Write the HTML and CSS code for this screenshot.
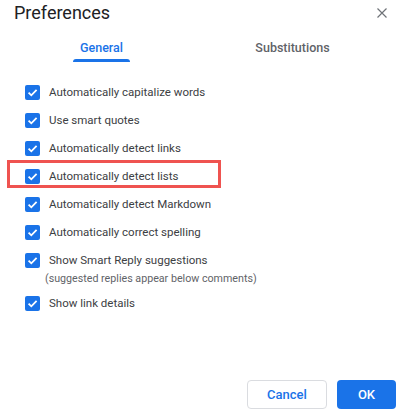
FILE: index.html
```html
<!DOCTYPE html>
<html>
<head>
<meta charset="utf-8">
<link rel="stylesheet" href="styles.css">
</head>
<body>
<div class="dialog">
  <div class="header">
    <span class="title">Preferences</span>
    <svg class="close" width="10" height="10" viewBox="0 0 10 10"><path d="M0.5 0.5L9.5 9.5M9.5 0.5L0.5 9.5" stroke="#6f7378" stroke-width="1.2" fill="none"/></svg>
  </div>
  <div class="tabs">
    <div class="tab active"><span>General</span><i class="bar"></i></div>
    <div class="tab"><span>Substitutions</span></div>
  </div>
  <div class="list">
    <div class="row"><span class="cb"><svg width="15" height="15" viewBox="0 0 15 15"><polyline points="3.6,7.6 6.3,10.3 11.6,4.8" stroke="#fff" stroke-width="1.8" fill="none"/></svg></span><span class="label">Automatically capitalize words</span></div>
    <div class="row"><span class="cb"><svg width="15" height="15" viewBox="0 0 15 15"><polyline points="3.6,7.6 6.3,10.3 11.6,4.8" stroke="#fff" stroke-width="1.8" fill="none"/></svg></span><span class="label">Use smart quotes</span></div>
    <div class="row"><span class="cb"><svg width="15" height="15" viewBox="0 0 15 15"><polyline points="3.6,7.6 6.3,10.3 11.6,4.8" stroke="#fff" stroke-width="1.8" fill="none"/></svg></span><span class="label">Automatically detect links</span></div>
    <div class="row highlighted"><span class="cb"><svg width="15" height="15" viewBox="0 0 15 15"><polyline points="3.6,7.6 6.3,10.3 11.6,4.8" stroke="#fff" stroke-width="1.8" fill="none"/></svg></span><span class="label">Automatically detect lists</span></div>
    <div class="row"><span class="cb"><svg width="15" height="15" viewBox="0 0 15 15"><polyline points="3.6,7.6 6.3,10.3 11.6,4.8" stroke="#fff" stroke-width="1.8" fill="none"/></svg></span><span class="label">Automatically detect Markdown</span></div>
    <div class="row"><span class="cb"><svg width="15" height="15" viewBox="0 0 15 15"><polyline points="3.6,7.6 6.3,10.3 11.6,4.8" stroke="#fff" stroke-width="1.8" fill="none"/></svg></span><span class="label">Automatically correct spelling</span></div>
    <div class="row"><span class="cb"><svg width="15" height="15" viewBox="0 0 15 15"><polyline points="3.6,7.6 6.3,10.3 11.6,4.8" stroke="#fff" stroke-width="1.8" fill="none"/></svg></span><span class="label">Show Smart Reply suggestions</span></div>
    <div class="sub">(suggested replies appear below comments)</div>
    <div class="row after-sub"><span class="cb"><svg width="15" height="15" viewBox="0 0 15 15"><polyline points="3.6,7.6 6.3,10.3 11.6,4.8" stroke="#fff" stroke-width="1.8" fill="none"/></svg></span><span class="label">Show link details</span></div>
  </div>
  <div class="footer">
    <button class="btn cancel">Cancel</button>
    <button class="btn ok">OK</button>
  </div>
</div>
</body>
</html>
```

FILE: styles.css
```css
html, body {
  margin: 0;
  padding: 0;
  background: #fff;
}
body {
  font-family: Roboto, "Liberation Sans", Arial, sans-serif;
  color: #3c4043;
}
.dialog {
  height: 416px;
  display: flex;
  flex-direction: column;
  box-sizing: border-box;
}
.header {
  display: flex;
  align-items: center;
  justify-content: space-between;
  height: 26px;
  padding: 0 13px 0 14px;
}
.title {
  font-size: 18px;
  line-height: 26px;
  color: #202124;
}
.close {
  display: block;
}
.tabs {
  display: flex;
  margin-top: 12px;
  padding-left: 6px;
  width: 382px;
  height: 24px;
}
.tab {
  flex: 1;
  position: relative;
  display: flex;
  justify-content: center;
  font-size: 12.5px;
  font-weight: 500;
  line-height: 20px;
  color: #5f6368;
}
.tab.active {
  color: #1a73e8;
}
.bar {
  position: absolute;
  bottom: 0;
  left: 50%;
  width: 57px;
  margin-left: -28.5px;
  height: 3px;
  border-radius: 3px 3px 0 0;
  background: #1a73e8;
}
.list {
  display: flex;
  flex-direction: column;
  margin-top: 16px;
}
.row {
  display: flex;
  align-items: center;
  height: 28px;
  padding-left: 25px;
  position: relative;
}
.cb {
  width: 15px;
  height: 15px;
  border-radius: 2px;
  background: #1a73e8;
  display: flex;
  flex: none;
}
.label {
  margin-left: 9px;
  font-size: 11.5px;
  color: #3c4043;
}
.highlighted::after {
  content: "";
  position: absolute;
  left: 7px;
  top: -2px;
  width: 214px;
  height: 28px;
  border: 3px solid #ef5350;
  box-sizing: border-box;
}
.sub {
  margin-top: -4px;
  padding-left: 45px;
  font-size: 10.7px;
  line-height: 18px;
  color: #5f6368;
}
.after-sub {
  margin-top: 1px;
}
.footer {
  margin-top: auto;
  display: flex;
  justify-content: flex-end;
  gap: 10px;
  padding: 0 4px 7px 0;
}
.btn {
  height: 29px;
  border-radius: 4px;
  font-family: Roboto, "Liberation Sans", Arial, sans-serif;
  font-size: 13px;
  font-weight: 500;
  padding: 0;
}
.cancel {
  width: 80px;
  background: #fff;
  border: 1px solid #dadce0;
  color: #1a73e8;
}
.ok {
  width: 59px;
  background: #1a73e8;
  border: none;
  color: #fff;
}
```
